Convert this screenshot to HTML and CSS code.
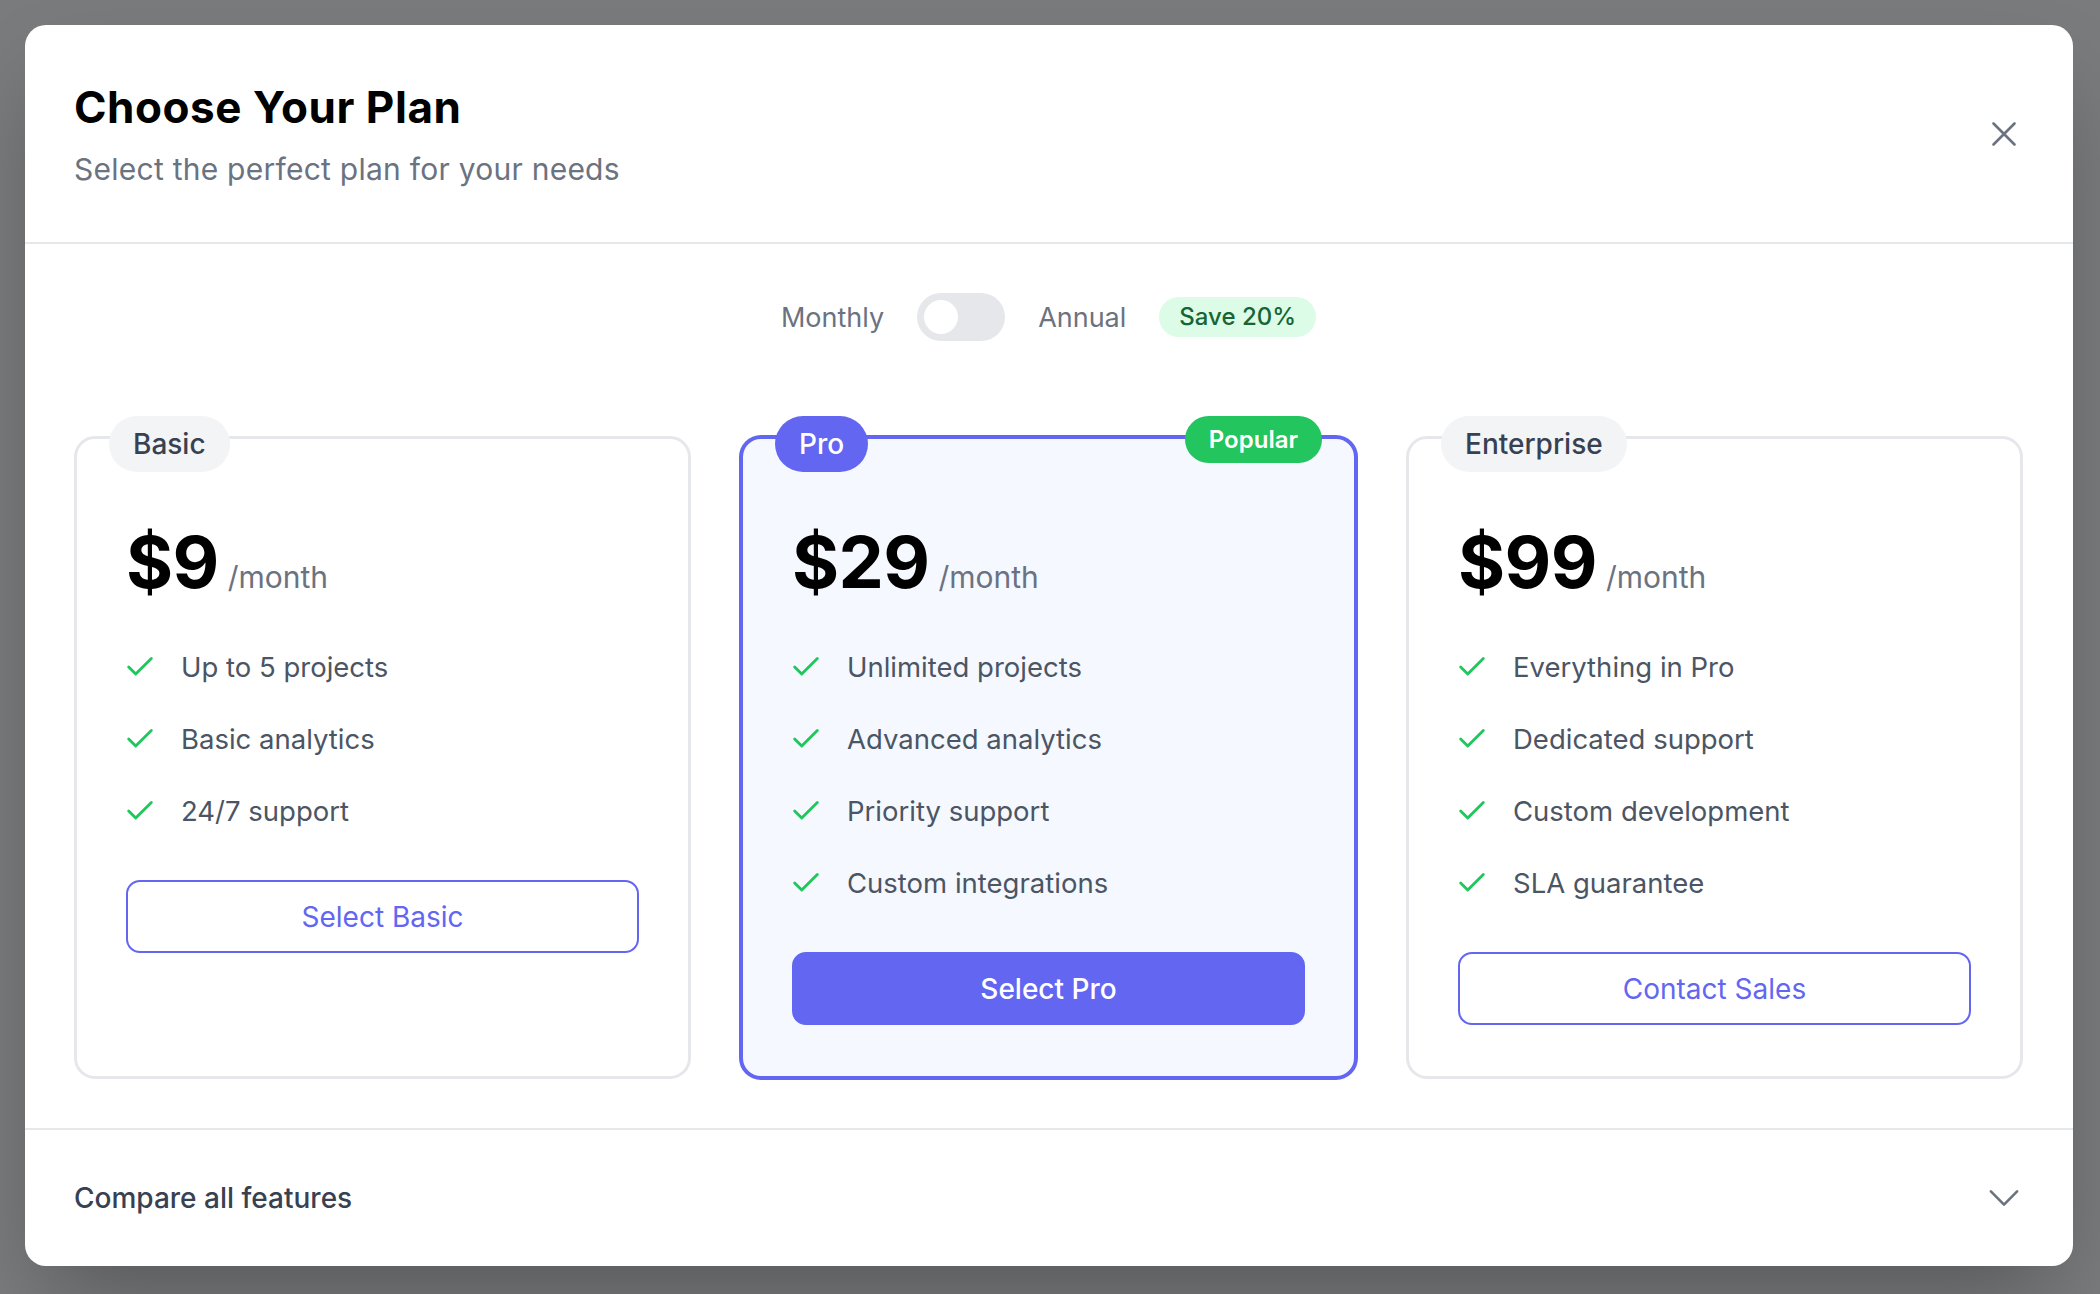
FILE: index.html
```html
<!DOCTYPE html>
<html lang="en">
<head>
<meta charset="utf-8">
<title>Choose Your Plan</title>
<link rel="stylesheet" href="styles.css">
</head>
<body>
<div class="modal">
  <header class="modal-header">
    <div class="heading">
      <h1 class="title">Choose Your Plan</h1>
      <p class="subtitle">Select the perfect plan for your needs</p>
    </div>
    <button class="icon-btn" aria-label="Close">
      <svg viewBox="0 0 24 24" width="42" height="42" fill="none" stroke="currentColor" stroke-width="1.5" stroke-linecap="round" stroke-linejoin="round"><path d="M6 18 18 6M6 6l12 12"/></svg>
    </button>
  </header>

  <section class="modal-body">
    <div class="billing">
      <span class="billing-label">Monthly</span>
      <span class="switch"><span class="knob"></span></span>
      <span class="billing-label">Annual</span>
      <span class="save">Save 20%</span>
    </div>

    <div class="plans">
      <div class="plan">
        <span class="plan-tag">Basic</span>
        <div class="price"><span class="amount">$9</span><span class="period">/month</span></div>
        <ul class="features">
          <li><svg class="check" viewBox="0 0 24 24"><polyline points="20 6 9 17 4 12"/></svg><span>Up to 5 projects</span></li>
          <li><svg class="check" viewBox="0 0 24 24"><polyline points="20 6 9 17 4 12"/></svg><span>Basic analytics</span></li>
          <li><svg class="check" viewBox="0 0 24 24"><polyline points="20 6 9 17 4 12"/></svg><span>24/7 support</span></li>
        </ul>
        <button class="btn btn-outline">Select Basic</button>
      </div>

      <div class="plan plan-featured">
        <span class="plan-tag plan-tag-pro">Pro</span>
        <span class="popular">Popular</span>
        <div class="price"><span class="amount">$29</span><span class="period">/month</span></div>
        <ul class="features">
          <li><svg class="check" viewBox="0 0 24 24"><polyline points="20 6 9 17 4 12"/></svg><span>Unlimited projects</span></li>
          <li><svg class="check" viewBox="0 0 24 24"><polyline points="20 6 9 17 4 12"/></svg><span>Advanced analytics</span></li>
          <li><svg class="check" viewBox="0 0 24 24"><polyline points="20 6 9 17 4 12"/></svg><span>Priority support</span></li>
          <li><svg class="check" viewBox="0 0 24 24"><polyline points="20 6 9 17 4 12"/></svg><span>Custom integrations</span></li>
        </ul>
        <button class="btn btn-primary">Select Pro</button>
      </div>

      <div class="plan">
        <span class="plan-tag">Enterprise</span>
        <div class="price"><span class="amount">$99</span><span class="period">/month</span></div>
        <ul class="features">
          <li><svg class="check" viewBox="0 0 24 24"><polyline points="20 6 9 17 4 12"/></svg><span>Everything in Pro</span></li>
          <li><svg class="check" viewBox="0 0 24 24"><polyline points="20 6 9 17 4 12"/></svg><span>Dedicated support</span></li>
          <li><svg class="check" viewBox="0 0 24 24"><polyline points="20 6 9 17 4 12"/></svg><span>Custom development</span></li>
          <li><svg class="check" viewBox="0 0 24 24"><polyline points="20 6 9 17 4 12"/></svg><span>SLA guarantee</span></li>
        </ul>
        <button class="btn btn-outline">Contact Sales</button>
      </div>
    </div>
  </section>

  <footer class="modal-footer">
    <span class="compare">Compare all features</span>
    <svg class="chevron" viewBox="0 0 24 24" width="42" height="42" fill="none" stroke="currentColor" stroke-width="1.5" stroke-linecap="round" stroke-linejoin="round"><path d="m19.5 8.25-7.5 7.5-7.5-7.5"/></svg>
  </footer>
</div>
</body>
</html>
```

FILE: styles.css
```css
* { box-sizing: border-box; }

html, body { margin: 0; padding: 0; }

body {
  background: #7a7b7d;
  font-family: "Inter", "Liberation Sans", sans-serif;
  padding: 25px 27px 29px 25px;
  height: 1294px;
  overflow: hidden;
}

.modal {
  width: 2048px;
  background: #ffffff;
  border-radius: 21px;
  box-shadow: 0 44px 88px -21px rgba(0, 0, 0, 0.3);
}

.modal-header {
  display: flex;
  align-items: center;
  justify-content: space-between;
  padding: 54px 48px 54px 49px;
  border-bottom: 2px solid #e5e7eb;
}

.title {
  margin: 0;
  font-size: 44px;
  line-height: 56px;
  font-weight: 700;
  color: #000000;
  letter-spacing: 0.55px;
}

.subtitle {
  margin: 15px 0 0;
  font-size: 30px;
  line-height: 38px;
  color: #6b7280;
  letter-spacing: 0.25px;
}

.icon-btn {
  border: 0;
  background: none;
  padding: 0;
  width: 42px;
  height: 42px;
  color: #6b7280;
  display: flex;
}

.modal-body {
  padding: 49px 50px 49px 49px;
}

.billing {
  display: flex;
  align-items: center;
  justify-content: center;
  gap: 33px;
  height: 48px;
  margin-bottom: 95px;
}

.billing-label {
  font-size: 27px;
  color: #6b7280;
}

.switch {
  position: relative;
  width: 88px;
  height: 48px;
  border-radius: 24px;
  background: #e5e7eb;
}

.knob {
  position: absolute;
  top: 7px;
  left: 7px;
  width: 34px;
  height: 34px;
  border-radius: 50%;
  background: #ffffff;
}

.save {
  height: 40px;
  line-height: 40px;
  padding: 0 20px;
  border-radius: 20px;
  background: #dcfce7;
  color: #166534;
  font-size: 24px;
  font-weight: 500;
}

.plans {
  display: grid;
  grid-template-columns: repeat(3, 1fr);
  gap: 49px;
  align-items: stretch;
}

.plan {
  position: relative;
  display: flex;
  flex-direction: column;
  align-items: stretch;
  border: 3px solid #e5e7eb;
  border-radius: 21px;
  background: #ffffff;
  padding: 87px 49px 51px;
}

.plan-featured {
  border: 3px solid #6366f1;
  background: #f5f8ff;
  box-shadow: 0 0 0 1px #6366f1;
}

.plan-tag {
  position: absolute;
  top: -23px;
  left: 32px;
  height: 56px;
  line-height: 56px;
  padding: 0 24px;
  border-radius: 28px;
  background: #f3f4f6;
  color: #374151;
  font-size: 28px;
  font-weight: 500;
}

.plan-tag-pro {
  background: #6366f1;
  color: #ffffff;
}

.popular {
  position: absolute;
  top: -23px;
  right: 32px;
  height: 47px;
  line-height: 47px;
  padding: 0 24px;
  border-radius: 24px;
  background: #22c55e;
  color: #ffffff;
  font-size: 24px;
  font-weight: 600;
}

.price {
  display: flex;
  align-items: baseline;
  height: 72px;
  line-height: 72px;
}

.amount {
  font-size: 72px;
  font-weight: 700;
  color: #000000;
  letter-spacing: -0.6px;
}

.period {
  margin-left: 9px;
  font-size: 30px;
  color: #6b7280;
}

.features {
  list-style: none;
  margin: 48px 0 0;
  padding: 0;
  display: flex;
  flex-direction: column;
  gap: 30px;
}

.features li {
  display: flex;
  align-items: center;
  height: 42px;
  font-size: 27.5px;
  color: #4b5563;
}

.check {
  width: 34px;
  height: 34px;
  margin-left: -3px;
  margin-right: 24px;
  fill: none;
  stroke: #22c55e;
  stroke-width: 2;
  stroke-linecap: round;
  stroke-linejoin: round;
  flex: none;
}

.btn {
  margin-top: 48px;
  height: 73px;
  border-radius: 14px;
  font-family: inherit;
  font-size: 28px;
  font-weight: 400;
  cursor: pointer;
}

.btn-outline {
  border: 2px solid #6366f1;
  background: #ffffff;
  color: #6366f1;
}

.btn-primary {
  border: 2px solid #6366f1;
  background: #6366f1;
  color: #ffffff;
  font-weight: 500;
}

.modal-footer {
  display: flex;
  align-items: center;
  justify-content: space-between;
  border-top: 2px solid #e5e7eb;
  padding: 47px 48px 47px 49px;
}

.compare {
  font-size: 28px;
  font-weight: 500;
  color: #374151;
}

.chevron {
  color: #6b7280;
  flex: none;
}
```
